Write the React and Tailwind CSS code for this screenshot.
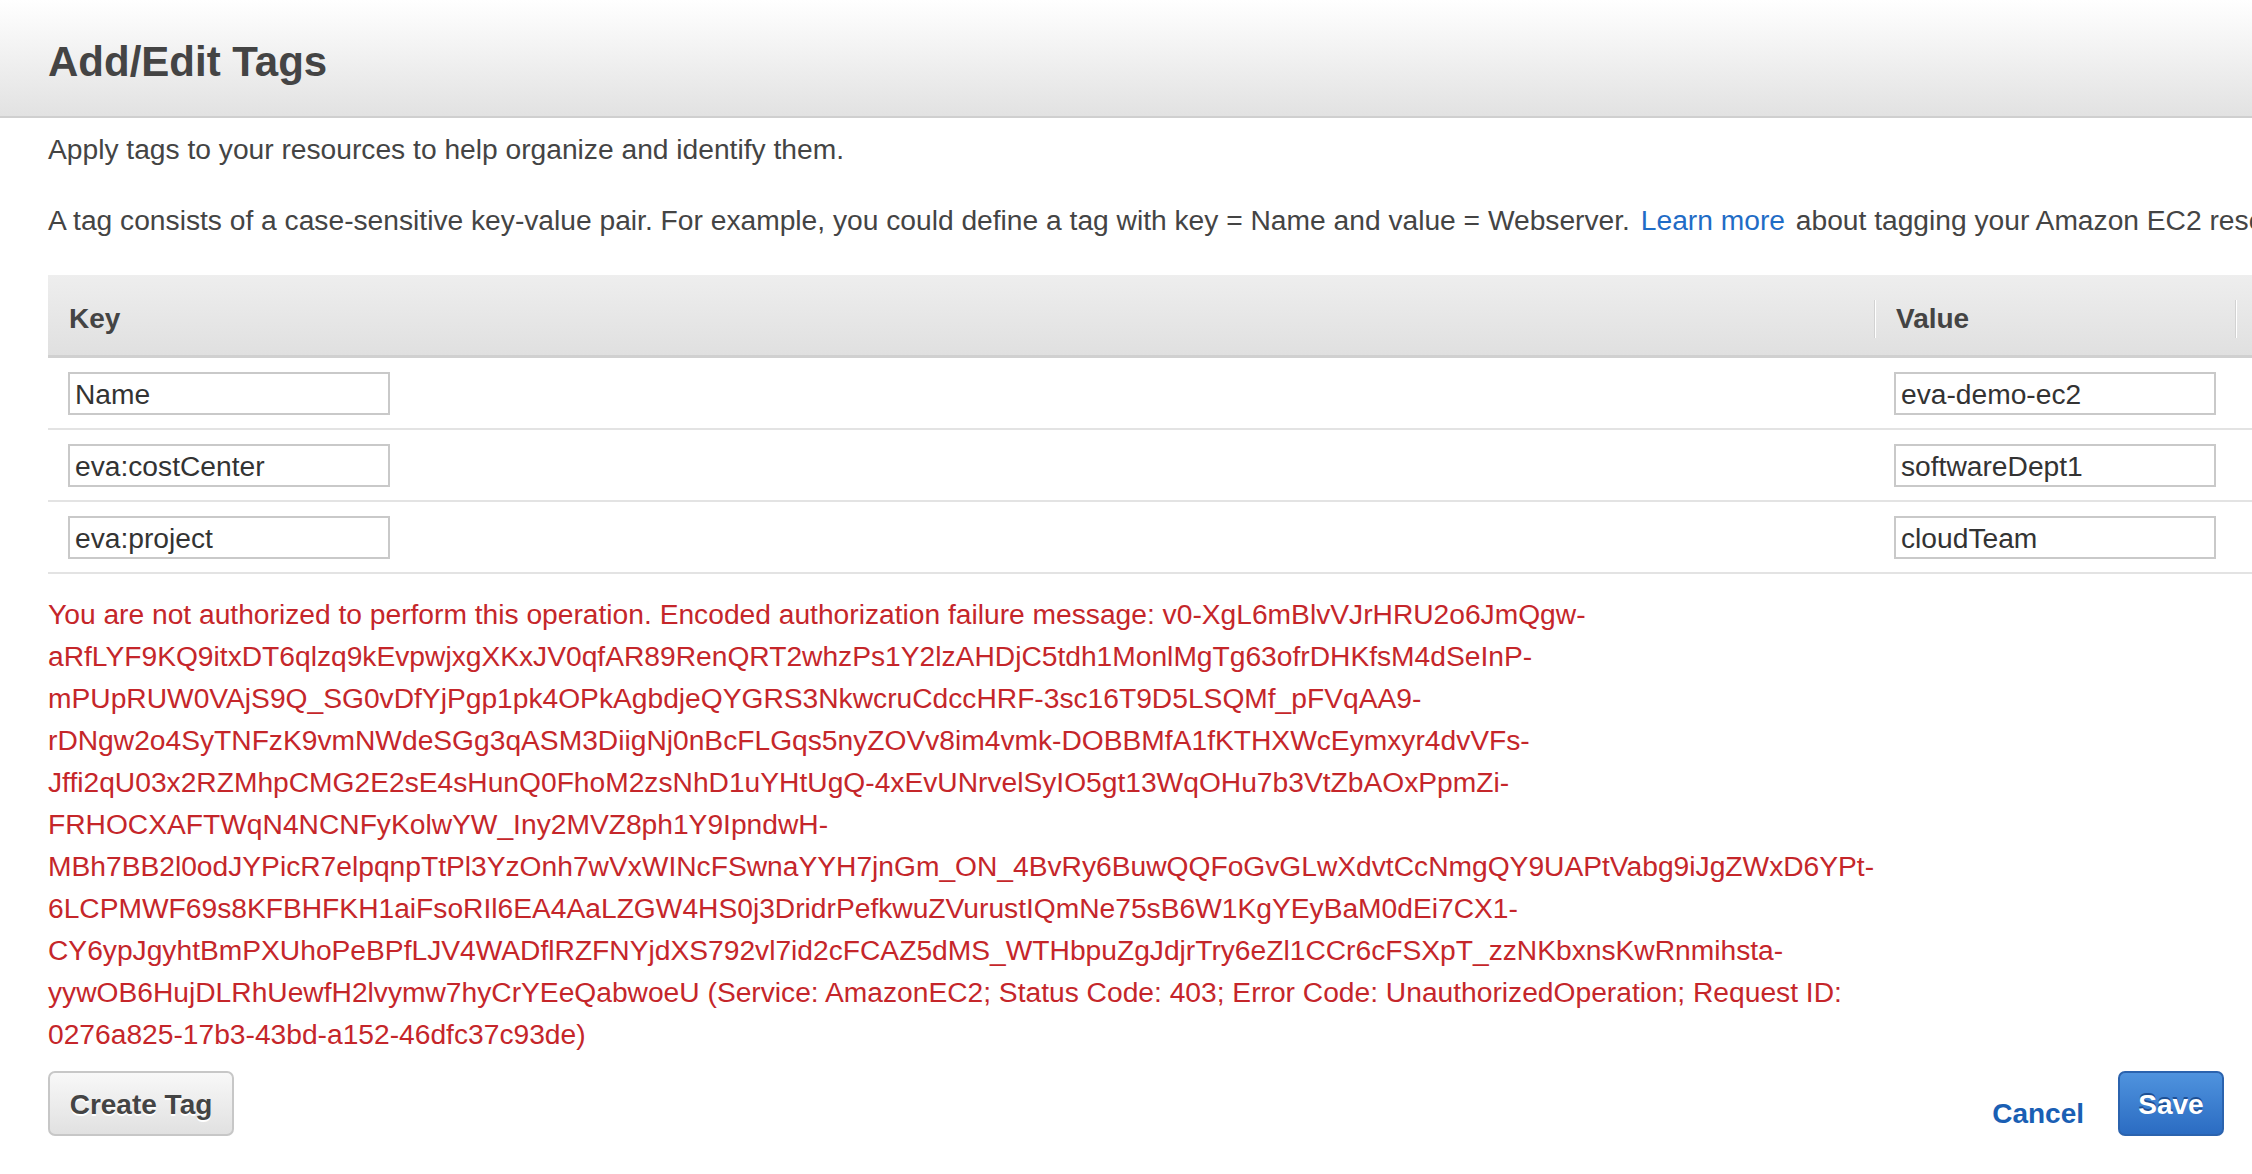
import React from "react";

const rows = [
  { k: "Name", v: "eva-demo-ec2" },
  { k: "eva:costCenter", v: "softwareDept1" },
  { k: "eva:project", v: "cloudTeam" },
];

const errorLines = [
  "You are not authorized to perform this operation. Encoded authorization failure message: v0-XgL6mBlvVJrHRU2o6JmQgw-",
  "aRfLYF9KQ9itxDT6qlzq9kEvpwjxgXKxJV0qfAR89RenQRT2whzPs1Y2lzAHDjC5tdh1MonlMgTg63ofrDHKfsM4dSeInP-",
  "mPUpRUW0VAjS9Q_SG0vDfYjPgp1pk4OPkAgbdjeQYGRS3NkwcruCdccHRF-3sc16T9D5LSQMf_pFVqAA9-",
  "rDNgw2o4SyTNFzK9vmNWdeSGg3qASM3DiigNj0nBcFLGqs5nyZOVv8im4vmk-DOBBMfA1fKTHXWcEymxyr4dvVFs-",
  "Jffi2qU03x2RZMhpCMG2E2sE4sHunQ0FhoM2zsNhD1uYHtUgQ-4xEvUNrvelSyIO5gt13WqOHu7b3VtZbAOxPpmZi-",
  "FRHOCXAFTWqN4NCNFyKolwYW_Iny2MVZ8ph1Y9IpndwH-",
  "MBh7BB2l0odJYPicR7elpqnpTtPl3YzOnh7wVxWINcFSwnaYYH7jnGm_ON_4BvRy6BuwQQFoGvGLwXdvtCcNmgQY9UAPtVabg9iJgZWxD6YPt-",
  "6LCPMWF69s8KFBHFKH1aiFsoRIl6EA4AaLZGW4HS0j3DridrPefkwuZVurustIQmNe75sB6W1KgYEyBaM0dEi7CX1-",
  "CY6ypJgyhtBmPXUhoPeBPfLJV4WADflRZFNYjdXS792vl7id2cFCAZ5dMS_WTHbpuZgJdjrTry6eZl1CCr6cFSXpT_zzNKbxnsKwRnmihsta-",
  "yywOB6HujDLRhUewfH2lvymw7hyCrYEeQabwoeU (Service: AmazonEC2; Status Code: 403; Error Code: UnauthorizedOperation; Request ID:",
  "0276a825-17b3-43bd-a152-46dfc37c93de)",
];

function TagInput({ value }) {
  return (
    <div className="w-[322px] h-[43px] border-2 border-[#c9c9c9] bg-white flex items-center pl-[5px] pt-[1px] text-[28.2px] leading-[34px] text-[#333] whitespace-nowrap">
      {value}
    </div>
  );
}

export default function App() {
  return (
    <div className="w-[2252px] h-[1174px] overflow-hidden bg-white text-[#444] font-['Liberation_Sans',Arial,sans-serif]">
      {/* Header */}
      <div className="h-[118px] border-b-2 border-[#cfcfcf] bg-gradient-to-b from-[#ffffff] to-[#e2e2e2] pl-[48px] pt-[38px]">
        <h1 className="text-[42px] leading-[48px] font-bold text-[#444]">Add/Edit Tags</h1>
      </div>

      <div className="pl-[48px]">
        <p className="mt-[14px] text-[28.2px] leading-[34px] whitespace-nowrap">
          Apply tags to your resources to help organize and identify them.
        </p>
        <p className="mt-[37px] text-[28.2px] leading-[34px] whitespace-nowrap">
          A tag consists of a case-sensitive key-value pair. For example, you could define a tag with key = Name and value = Webserver.{" "}
          <a className="text-[#1f6cc6] mx-[3px]">Learn more</a>{" "}
          about tagging your Amazon EC2 resources.
        </p>

        {/* Table */}
        <div className="mt-[38px] w-[2400px]">
          <div className="flex h-[83px] border-b-[3px] border-[#d0d0d0] bg-gradient-to-b from-[#eeeeee] to-[#e0e0e0]">
            <div className="w-[1826px] flex items-center pl-[21px] pt-[7px] text-[28px] leading-[34px] font-bold text-[#444]">
              Key
            </div>
            <div className="w-[2px] self-center h-[38px] mt-[8px] bg-[#d2d2d2] border-r border-white"></div>
            <div className="w-[359px] flex items-center pl-[20px] pt-[7px] text-[28px] leading-[34px] font-bold text-[#444]">
              Value
            </div>
            <div className="w-[2px] self-center h-[38px] mt-[8px] bg-[#d2d2d2] border-r border-white"></div>
            <div className="flex-1"></div>
          </div>
          {rows.map((r) => (
            <div key={r.k} className="flex h-[72px] border-b-2 border-[#e3e3e3] items-center">
              <div className="w-[1826px] pl-[20px]">
                <TagInput value={r.k} />
              </div>
              <div className="w-[361px] pl-[20px]">
                <TagInput value={r.v} />
              </div>
            </div>
          ))}
        </div>

        {/* Error */}
        <div className="mt-[19px] text-[28.2px] leading-[42px] text-[#c5262a] whitespace-nowrap">
          {errorLines.map((l, i) => (
            <div key={i}>{l}</div>
          ))}
        </div>

        {/* Footer */}
        <div className="mt-[16px] w-[2176px] flex justify-between items-start">
          <button className="h-[65px] w-[186px] rounded-[7px] border-2 border-[#c7c7c7] bg-gradient-to-b from-[#f8f8f8] to-[#e1e1e1] pt-[2px] text-[28px] font-bold text-[#444] [text-shadow:0_2px_0_#ffffff]">
            Create Tag
          </button>
          <div className="flex items-start">
            <a className="mt-[26px] mr-[34px] text-[28px] leading-[34px] font-bold text-[#1a5fb4]">Cancel</a>
            <button className="h-[65px] w-[106px] rounded-[7px] border-2 border-[#2b63ae] bg-gradient-to-b from-[#4f93de] to-[#2b6cc2] pt-[2px] text-[28px] font-bold text-white [text-shadow:0_-2px_0_#1d4f94]">
              Save
            </button>
          </div>
        </div>
      </div>
    </div>
  );
}
